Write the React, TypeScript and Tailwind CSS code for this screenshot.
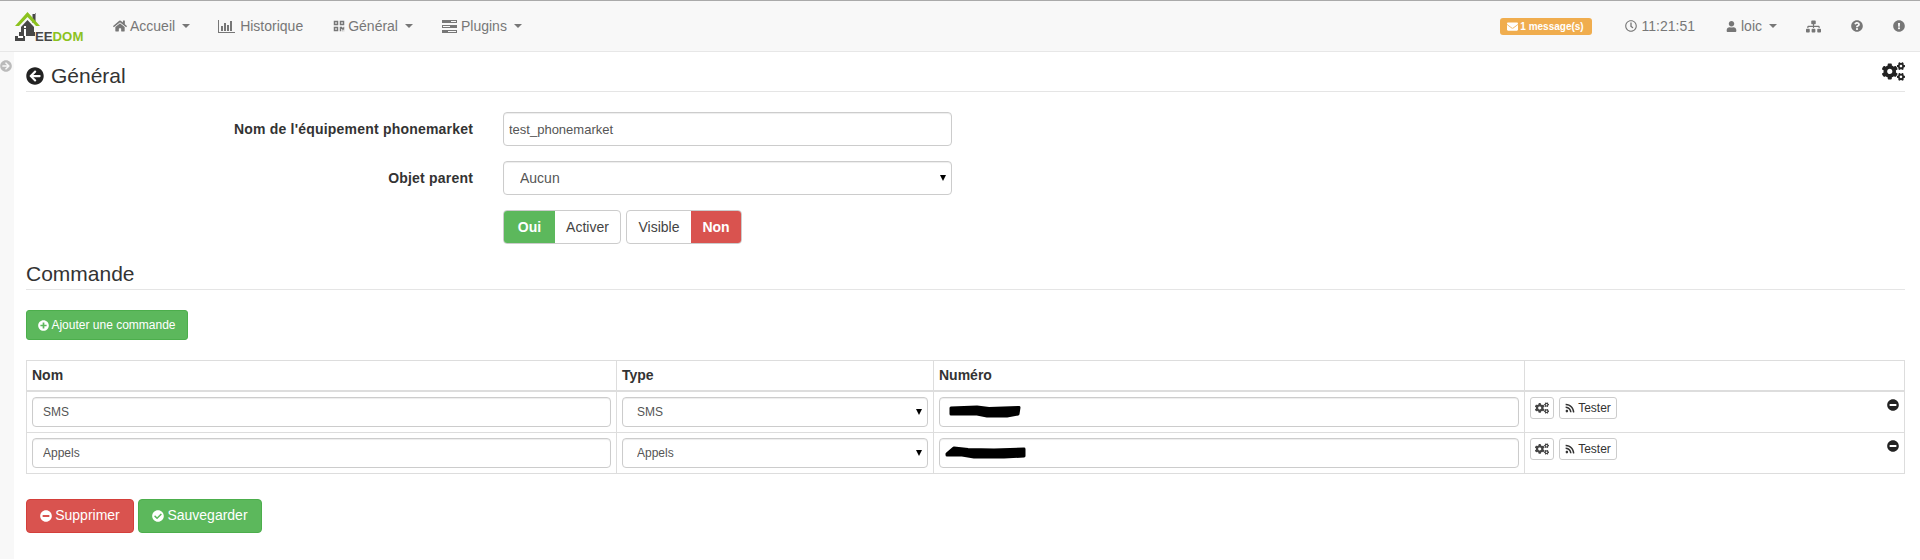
import React from "react";
import {
  FaHome, FaQrcode, FaEnvelope, FaRegClock, FaUser, FaSitemap, FaQuestionCircle, FaExclamationCircle,
  FaArrowCircleLeft, FaArrowCircleRight, FaCogs, FaPlusCircle, FaMinusCircle, FaCheckCircle, FaRss,
} from "react-icons/fa";

const Caret = () => (
  <span className="ml-[7px] inline-block h-0 w-0 border-x-[4px] border-t-[4px] border-x-transparent border-t-[#777]" />
);

const Logo = () => (
  <svg width="72" height="32" viewBox="0 0 72 32" className="block">
    <rect x="21" y="1" width="1" height="10" fill="#999" />
    <rect x="18.5" y="2" width="2.5" height="9" fill="#474747" />
    <path d="M7 15 L13.5 8 L20 15 V20 L21 20 V24 H11 V29 H1 V24 H5 V20 H7 Z" fill="#474747" />
    <rect x="10" y="17" width="2" height="7" fill="#fff" />
    <rect x="10" y="14" width="2" height="2" fill="#fff" />
    <path d="M4 24 H9 V26 H4 Z" fill="#fff" />
    <path d="M1 14 L13.5 0 L26 14 H22 L13.5 5 L5 14 Z" fill="#8cc21f" />
    <text x="21" y="29" fontFamily="'Liberation Sans', sans-serif" fontWeight="700" fontSize="13.2">
      <tspan fill="#474747">EE</tspan>
      <tspan fill="#8cc21f">DOM</tspan>
    </text>
  </svg>
);

const BarsIcon = () => (
  <svg width="17" height="13" viewBox="0 0 17 13" className="block" fill="#777">
    <rect x="0" y="0" width="1" height="13" />
    <rect x="0" y="12" width="17" height="1" />
    <rect x="3" y="6" width="2" height="5" />
    <rect x="6" y="3" width="2" height="8" />
    <rect x="9" y="5" width="2" height="6" />
    <rect x="12" y="1" width="2" height="10" />
  </svg>
);

const TasksIcon = () => (
  <svg width="15" height="13" viewBox="0 0 15 13" className="block" fill="#777">
    <rect x="0" y="0" width="15" height="3" />
    <rect x="0" y="5" width="15" height="3" />
    <rect x="0" y="10" width="15" height="3" />
    <rect x="9" y="1" width="5" height="1" fill="#f8f8f8" />
    <rect x="1" y="6" width="7" height="1" fill="#f8f8f8" />
    <rect x="6" y="11" width="8" height="1" fill="#f8f8f8" />
  </svg>
);

const Scribble1 = () => (
  <svg width="76" height="16" viewBox="0 0 76 16" className="absolute left-[8px] top-[7px]">
    <path d="M4 4 L30 3 L42 4.5 L72 3.5 L71 10 L60 12 L40 12 L30 10 L4 10 Z" fill="#000" stroke="#000" strokeWidth="3" strokeLinejoin="round" />
  </svg>
);

const Scribble2 = () => (
  <svg width="84" height="16" viewBox="0 0 84 16" className="absolute left-[5px] top-[7px]">
    <path d="M3 9 L10 3 L24 4.5 L50 5 L80 4 L80 11 L60 12 L30 12 L18 10 L3 10 Z" fill="#000" stroke="#000" strokeWidth="3" strokeLinejoin="round" />
  </svg>
);

const SelectArrow = () => (
  <span className="pointer-events-none absolute right-[6px] top-1/2 h-0 w-0 -translate-y-1/2 border-x-[3px] border-t-[6px] border-x-transparent border-t-black" />
);

const inputCls =
  "w-full rounded-[4px] border border-[#ccc] bg-white text-[#555] shadow-[inset_0_1px_1px_rgba(0,0,0,0.075)] outline-none";

function Row({ name, type, scribble }: { name: string; type: string; scribble: React.ReactNode }) {
  return (
    <tr className="h-[41px]">
      <td className="border border-[#ddd] p-[5px] align-top">
        <input readOnly value={name} className={`${inputCls} h-[30px] pl-[10px] text-[12px]`} />
      </td>
      <td className="border border-[#ddd] p-[5px] align-top">
        <div className="relative">
          <select defaultValue={type} className={`${inputCls} h-[30px] appearance-none pl-[14px] text-[12px]`}>
            <option>{type}</option>
          </select>
          <SelectArrow />
        </div>
      </td>
      <td className="border border-[#ddd] p-[5px] align-top">
        <div className="relative">
          <input readOnly className={`${inputCls} h-[30px] text-[12px]`} />
          {scribble}
        </div>
      </td>
      <td className="border border-[#ddd] p-[5px] align-top">
        <div className="flex items-start">
          <button className="flex h-[22px] w-[24px] items-center justify-center rounded-[3px] border border-[#ccc] bg-white text-[#444]">
            <FaCogs size={14} />
          </button>
          <button className="ml-[5px] flex h-[22px] w-[58px] items-center justify-center rounded-[3px] border border-[#ccc] bg-white text-[12px] text-[#333]">
            <FaRss size={10} className="mr-[3px]" />
            Tester
          </button>
          <FaMinusCircle size={12} className="ml-auto mt-[2px] text-[#222]" />
        </div>
      </td>
    </tr>
  );
}

export default function App() {
  return (
    <div className="min-h-[560px] bg-white font-['Liberation_Sans',Arial,sans-serif] text-[14px] text-[#333]">
      <header className="flex h-[52px] items-center border-t border-b border-t-[#aaa] border-b-[#e7e7e7] bg-[#f8f8f8] text-[#777]">
        <div className="ml-[14px] mt-[4px] w-[72px]"><Logo /></div>
        <nav className="ml-[27px] flex items-center">
          <span className="flex items-center"><FaHome size={14} className="mr-[3px]" />Accueil<Caret /></span>
          <span className="ml-[28px] flex items-center"><span className="mr-[5px]"><BarsIcon /></span>Historique</span>
          <span className="ml-[30px] flex items-center"><FaQrcode size={12} className="mr-[3px]" />Général<Caret /></span>
          <span className="ml-[29px] flex items-center"><span className="mr-[4px]"><TasksIcon /></span>Plugins<Caret /></span>
        </nav>
        <div className="ml-auto flex items-center pr-[15px]">
          <span className="flex h-[17px] w-[92px] items-center justify-center rounded-[3px] bg-[#f0ad4e] text-[10px] font-bold text-white">
            <FaEnvelope size={11} className="mr-[2px]" />1 message(s)
          </span>
          <span className="ml-[33px] flex items-center"><FaRegClock size={12} className="mr-[5px]" />11:21:51</span>
          <span className="ml-[31px] flex items-center"><FaUser size={11} className="mr-[4px]" />loic<Caret /></span>
          <FaSitemap size={15} className="ml-[29px]" />
          <FaQuestionCircle size={12} className="ml-[30px]" />
          <FaExclamationCircle size={12} className="ml-[30px]" />
        </div>
      </header>

      <div className="flex min-h-[507px]">
        <aside className="w-[14px] shrink-0 bg-[#f8f8f8] pt-[8px]">
          <FaArrowCircleRight size={12} className="text-[#bbb]" />
        </aside>
        <main className="min-w-0 flex-1 pl-[12px] pr-[15px]">
          <div className="mt-[8px] flex h-[32px] items-center justify-between border-b border-[#e5e5e5] text-[21px] leading-none">
            <span className="flex items-center">
              <FaArrowCircleLeft size={18} className="mr-[7px] text-[#222]" />Général
            </span>
            <FaCogs size={23} className="-mt-[8px] text-[#222]" />
          </div>

          <div className="mt-[20px] flex items-center">
            <label className="w-[447px] text-right font-bold tracking-[0.2px]">Nom de l'équipement phonemarket</label>
            <div className="ml-[30px] w-[449px]">
              <input readOnly value="test_phonemarket" className={`${inputCls} h-[34px] pl-[5px] text-[13px]`} />
            </div>
          </div>
          <div className="mt-[15px] flex items-center">
            <label className="w-[447px] text-right font-bold tracking-[0.2px]">Objet parent</label>
            <div className="relative ml-[30px] w-[449px]">
              <select defaultValue="Aucun" className={`${inputCls} h-[34px] appearance-none pl-[16px] text-[14px]`}>
                <option>Aucun</option>
              </select>
              <SelectArrow />
            </div>
          </div>
          <div className="ml-[477px] mt-[15px] flex">
            <div className="flex h-[34px] w-[118px] overflow-hidden rounded-[4px] border border-[#ccc]">
              <span className="flex w-[51px] items-center justify-center bg-[#5cb85c] font-bold text-white">Oui</span>
              <span className="flex flex-1 items-center justify-center text-[#444]">Activer</span>
            </div>
            <div className="ml-[5px] flex h-[34px] w-[116px] overflow-hidden rounded-[4px] border border-[#ccc]">
              <span className="flex flex-1 items-center justify-center text-[#444]">Visible</span>
              <span className="flex w-[50px] items-center justify-center bg-[#d9534f] font-bold text-white">Non</span>
            </div>
          </div>

          <div className="mt-[13px] flex h-[33px] items-center border-b border-[#e5e5e5] text-[21px] leading-none">Commande</div>

          <button className="mt-[20px] flex h-[30px] w-[162px] items-center justify-center rounded-[3px] border border-[#4cae4c] bg-[#5cb85c] text-[12px] text-white">
            <FaPlusCircle size={11} className="mr-[2px]" />Ajouter une commande
          </button>

          <table className="mt-[20px] w-full table-fixed border-collapse">
            <colgroup>
              <col className="w-[590px]" />
              <col className="w-[317px]" />
              <col className="w-[591px]" />
              <col />
            </colgroup>
            <thead>
              <tr className="h-[30px]">
                <th className="border border-b-2 border-[#ddd] px-[5px] py-0 text-left font-bold">Nom</th>
                <th className="border border-b-2 border-[#ddd] px-[5px] py-0 text-left font-bold">Type</th>
                <th className="border border-b-2 border-[#ddd] px-[5px] py-0 text-left font-bold">Numéro</th>
                <th className="border border-b-2 border-[#ddd] px-[5px] py-0" />
              </tr>
            </thead>
            <tbody>
              <Row name="SMS" type="SMS" scribble={<Scribble1 />} />
              <Row name="Appels" type="Appels" scribble={<Scribble2 />} />
            </tbody>
          </table>

          <div className="mt-[25px] flex">
            <button className="flex h-[34px] w-[108px] items-center justify-center rounded-[4px] border border-[#d43f3a] bg-[#d9534f] text-white">
              <FaMinusCircle size={12} className="mr-[3px]" />Supprimer
            </button>
            <button className="ml-[4px] flex h-[34px] w-[124px] items-center justify-center rounded-[4px] border border-[#4cae4c] bg-[#5cb85c] text-white">
              <FaCheckCircle size={12} className="mr-[3px]" />Sauvegarder
            </button>
          </div>
        </main>
      </div>
    </div>
  );
}
